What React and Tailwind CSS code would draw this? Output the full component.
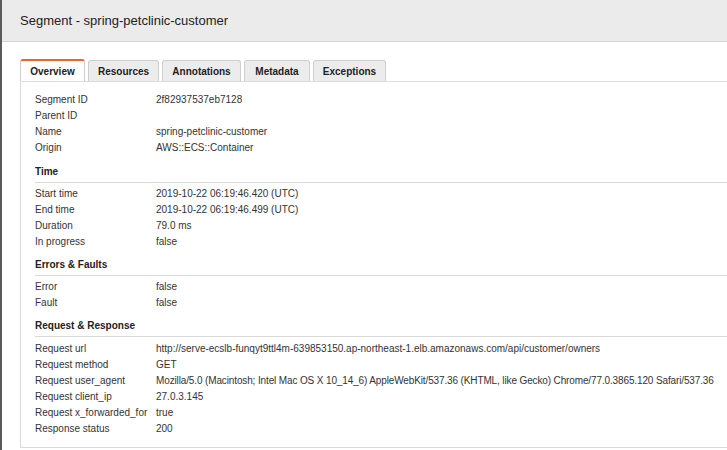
import React from "react";

const font = { fontFamily: '"Liberation Sans", Arial, Helvetica, sans-serif' };

function Row({ label, value, tight }) {
  return (
    <div className="flex h-[16px] items-center text-[10px] text-[#333] whitespace-nowrap">
      <div className="w-[121px] shrink-0">{label}</div>
      <div className={tight ? "tracking-[-0.13px]" : ""}>{value}</div>
    </div>
  );
}

function Section({ title, children, first }) {
  return (
    <div>
      <div className={(first ? "mt-[8px]" : "mt-[7px]") + " h-[16px] flex items-center text-[10px] font-bold text-[#222]"}>{title}</div>
      <div className="mt-[3px] border-b border-[#d9d9d9]" />
      <div className="pt-[2px]">{children}</div>
    </div>
  );
}

const tabs = ["Overview", "Resources", "Annotations", "Metadata", "Exceptions"];
const tabW = [65, 71, 79, 66, 73];

export default function App() {
  return (
    <div className="flex w-[727px] h-[450px] overflow-hidden bg-white" style={font}>
      <div className="w-[2px] shrink-0 bg-[#5a5a5a]" />
      <div className="flex-1 min-w-0 flex flex-col">
        <div className="h-[42px] shrink-0 bg-[#ebebeb] border-b border-[#d4d4d4] flex items-center pl-[18px] text-[13px] text-[#222]">
          Segment - spring-petclinic-customer
        </div>
        <div className="pl-[18px] pt-[17px] flex-1 flex flex-col min-h-0">
          <div className="flex gap-[3px] border-b border-[#dcdcdc] w-[900px]">
            {tabs.map((t, i) =>
              i === 0 ? (
                <div
                  key={t}
                  style={{ width: tabW[i] }}
                  className="h-[22px] -mb-px flex items-center justify-center bg-white border border-b-0 border-[#ccc] border-t-2 border-t-[#e9662c] rounded-t-[3px] text-[10px] font-bold text-[#222]"
                >
                  {t}
                </div>
              ) : (
                <div
                  key={t}
                  style={{ width: tabW[i] }}
                  className="h-[21px] mt-px flex items-center justify-center bg-[#ececec] border border-b-0 border-[#cfcfcf] rounded-t-[3px] text-[10px] font-bold text-[#222]"
                >
                  {t}
                </div>
              )
            )}
          </div>
          <div className="w-[900px] flex-1 mb-[2px] border-l border-b border-[#d9d9d9] pl-[14px] pt-[9px]">
            <Row label="Segment ID" value="2f82937537eb7128" />
            <Row label="Parent ID" value="" />
            <Row label="Name" value="spring-petclinic-customer" />
            <Row label="Origin" value="AWS::ECS::Container" />
            <Section title="Time" first>
              <Row label="Start time" value="2019-10-22 06:19:46.420 (UTC)" />
              <Row label="End time" value="2019-10-22 06:19:46.499 (UTC)" />
              <Row label="Duration" value="79.0 ms" />
              <Row label="In progress" value="false" />
            </Section>
            <Section title="Errors & Faults">
              <Row label="Error" value="false" />
              <Row label="Fault" value="false" />
            </Section>
            <Section title="Request & Response">
              <div className="pt-[1px]" />
              <Row label="Request url" value="http://serve-ecslb-funqyt9ttl4m-639853150.ap-northeast-1.elb.amazonaws.com/api/customer/owners" />
              <Row label="Request method" value="GET" />
              <Row label="Request user_agent" tight value="Mozilla/5.0 (Macintosh; Intel Mac OS X 10_14_6) AppleWebKit/537.36 (KHTML, like Gecko) Chrome/77.0.3865.120 Safari/537.36" />
              <Row label="Request client_ip" value="27.0.3.145" />
              <Row label="Request x_forwarded_for" value="true" />
              <Row label="Response status" value="200" />
            </Section>
          </div>
        </div>
      </div>
    </div>
  );
}
